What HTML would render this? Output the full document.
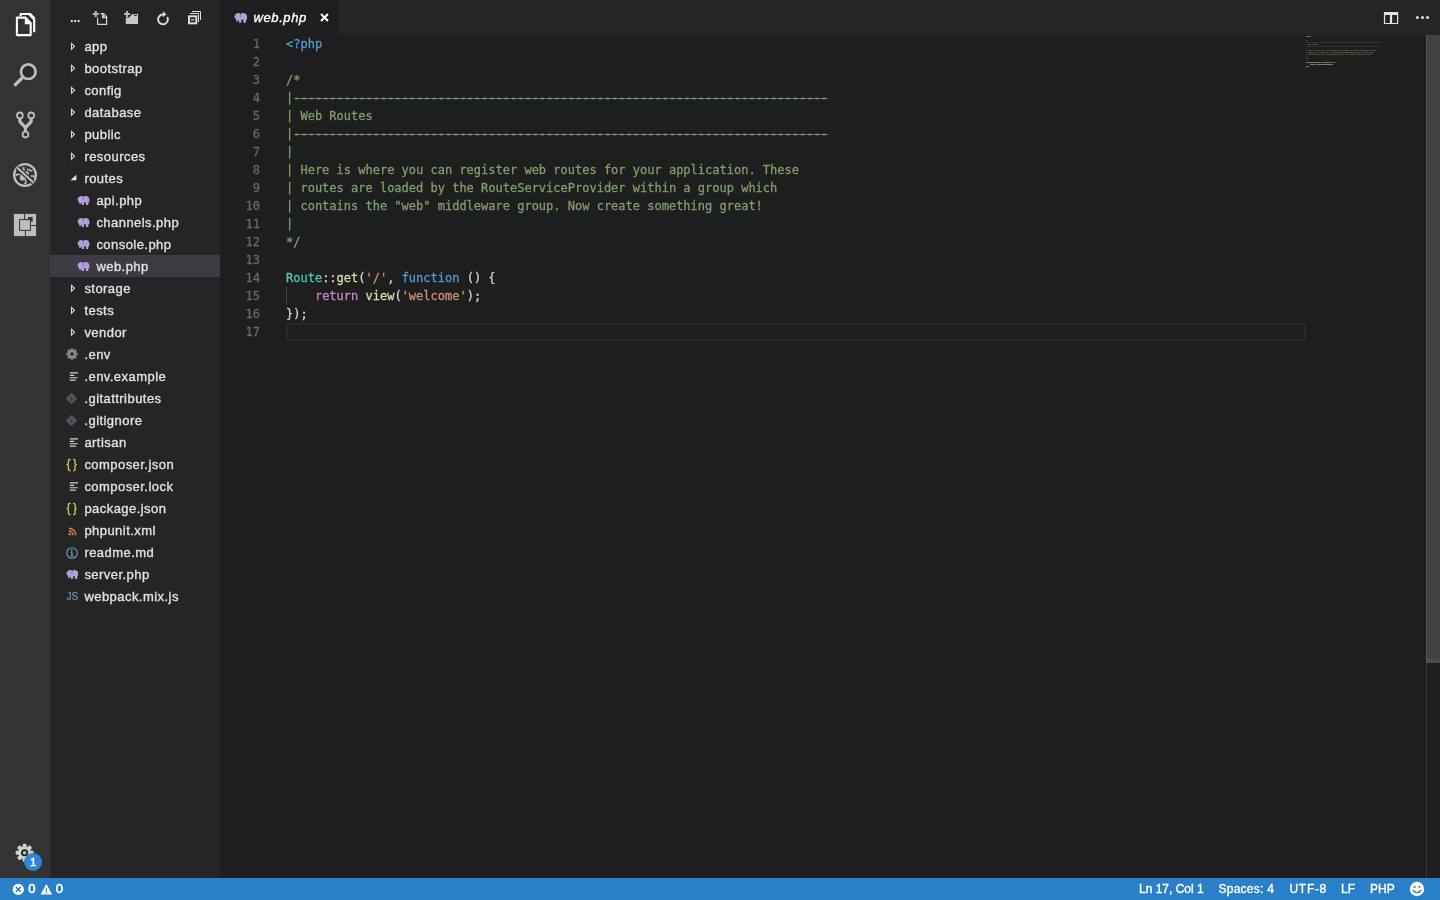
<!DOCTYPE html>
<html lang="en">
<head>
<meta charset="utf-8">
<title>web.php</title>
<style>
*{box-sizing:border-box;margin:0;padding:0}
html,body{width:1440px;height:900px;overflow:hidden;background:#1e1e1e}
body{font-family:"Liberation Sans","DejaVu Sans",sans-serif;font-size:13px;color:#cccccc;position:relative}
#activity{position:absolute;left:0;top:0;width:50px;height:878px;background:#333333}
#activity svg{position:absolute}
#badge{position:absolute;left:23.7px;top:852.6px;width:18.2px;height:18.2px;border-radius:50%;background:#2f86d6;color:#fff;text-align:center;will-change:transform}
#badge span{position:absolute;left:-10px;top:-10px;width:38.2px;height:38.2px;line-height:38.2px;font-size:30px;transform:scale(.385);-webkit-text-stroke:1.3px #fff}
#sidebar{position:absolute;left:50px;top:0;width:170px;height:878px;background:#252526}
#sidebar .hdr svg{position:absolute}
#tree{position:absolute;left:0;top:35px;width:170px;will-change:transform}
.row{position:relative;height:22px;line-height:22px;white-space:nowrap;color:#e0e0e0;font-size:13px;letter-spacing:.45px}
.row .lbl{position:absolute;left:34.4px;top:.5px;-webkit-text-stroke:.35px #e0e0e0}
.row.f2 .lbl{left:46.4px}
.row.sel{background:#3c3c43}
.row svg{position:absolute}
.row .tw{left:20px;top:7px}
#editor{position:absolute;left:220px;top:0;width:1220px;height:878px;background:#1e1e1e}
#tabs{will-change:transform;position:absolute;left:0;top:0;width:1220px;height:35px;background:#252526}
#tab{position:absolute;left:0;top:0;width:119px;height:35px;background:#1e1e1e}
#tab .name{position:absolute;left:33.5px;top:-.5px;line-height:35px;font-style:italic;color:#ffffff;font-size:13px;letter-spacing:.6px;-webkit-text-stroke:.35px #fff}
#code{will-change:transform;position:absolute;left:0;top:35px;width:1206px;font-family:"DejaVu Sans Mono","Liberation Mono",monospace;font-size:12px;line-height:18px;color:#d4d4d4;-webkit-text-stroke:.28px}
.ln{position:relative;height:18px;white-space:pre}
.ln .n{position:absolute;left:0;top:0;width:40px;text-align:right;color:#686868}
.ln .c{position:absolute;left:66px;top:0}
.cm{color:#819e6c}.kw{color:#569cd6}.cl{color:#4ec9b0}.fn{color:#dcdcaa}.st{color:#ce9178}.ct{color:#c586c0}
#status{will-change:transform;position:absolute;left:0;top:878px;width:1440px;height:22px;background:#2a7fc9;color:#fff;font-size:12px;line-height:22px}
#status span{position:absolute;top:0;white-space:nowrap;-webkit-text-stroke:.35px #fff}
#curline{position:absolute;left:66px;top:288px;width:1020px;height:18px;border:2px solid #282828}
#guide{position:absolute;left:66px;top:252px;width:1px;height:18px;background:#404040}
.dash{background:linear-gradient(rgba(129,158,108,.65),rgba(124,157,106,.65)) no-repeat 7.6px 6.7px/534px 1.2px;}
#minimap{position:absolute;left:1086px;top:35px;width:120px;height:40px}
#minimap i{position:absolute;height:1px;display:block}
#vscroll{position:absolute;left:1206px;top:35px;width:14px;height:843px}
</style>
</head>
<body>
<div id="activity">
<svg width="50" height="878" viewBox="0 0 50 878" style="left:0;top:0">
<!-- files -->
<g fill="none" stroke="#ffffff" stroke-width="2.1" stroke-linejoin="round">
<path d="M20.6 16 V14 H29.6 L34.2 18.9 V32.3"/>
<path d="M29.6 14 L34.2 18.9" stroke-width="3"/>
<path d="M16.9 17.6 H25.6 L30.7 23.2 V35.1 H16.9 Z"/>
</g>
<path d="M24.8 17 V24.3 H31 L25.6 17.4 Z" fill="#ffffff"/>
<!-- search -->
<circle cx="28.3" cy="71.7" r="7.3" fill="#2c2c2c" stroke="#bebebe" stroke-width="2.7"/>
<path d="M22.6 77.5 L14.4 85.7" stroke="#bebebe" stroke-width="3.2" fill="none"/>
<!-- git -->
<g fill="none" stroke="#bebebe">
<circle cx="19.9" cy="115.4" r="2.9" stroke-width="1.8"/>
<circle cx="31.2" cy="115.4" r="2.9" stroke-width="1.8"/>
<circle cx="25.5" cy="134.6" r="2.9" stroke-width="1.8"/>
<path d="M19.9 118.6 V121.6 L25.5 127.6 V131.4 M31.2 118.6 V121.6 L25.5 127.6" stroke-width="3.1" stroke-linejoin="round"/>
</g>
<!-- debug -->
<g fill="none" stroke="#bebebe">
<circle cx="25" cy="175" r="10.9" stroke-width="2.3"/>
<g stroke-width="1.5">
<path d="M16.3 176 V174.4 H20.4"/>
<path d="M24.2 183.6 H25.7 V179.6"/>
<path d="M22.3 167.9 H23.8 V171.4"/>
<path d="M30.6 176 H33.6 V177.4"/>
<path d="M29 169 L30.4 171 L32.4 170.4"/>
<path d="M27.4 168.6 L27.8 170.6"/>
</g>
</g>
<ellipse cx="24.4" cy="176" rx="3.4" ry="5.6" transform="rotate(45 24.4 176)" fill="#bebebe"/>
<path d="M17 167.4 L33.4 182.6" stroke="#333333" stroke-width="4.6" fill="none"/>
<path d="M17 167.4 L33.4 182.6" stroke="#bebebe" stroke-width="2.1" fill="none"/>
<!-- extensions -->
<rect x="13.9" y="213.9" width="22.2" height="22.2" fill="#bebebe"/>
<rect x="28.1" y="217" width="4.6" height="4.6" fill="#333333"/>
<path d="M24.7 213.9 V219.5 M30.5 225.5 H36.1 M25.4 230.5 V236.1" stroke="#333333" stroke-width="1" fill="none"/>
<rect x="19.6" y="219.6" width="10.8" height="10.8" fill="#bebebe" stroke="#333333" stroke-width="1"/>
<!-- gear -->
<g transform="translate(24.6 852.8)" fill="#d0d0d0">
<circle r="6.4"/>
<g id="teeth"><rect x="-2" y="-9" width="4" height="18" rx="1.2"/><rect x="-2" y="-9" width="4" height="18" rx="1.2" transform="rotate(45)"/><rect x="-2" y="-9" width="4" height="18" rx="1.2" transform="rotate(90)"/><rect x="-2" y="-9" width="4" height="18" rx="1.2" transform="rotate(135)"/></g>
<circle r="2.7" fill="#bdbdbd" stroke="#1e1e1e" stroke-width="1.7"/>
</g>

</svg>
<div id="badge"><span>1</span></div>
</div>
<div id="sidebar"><div class="hdr">
<svg width="170" height="35" viewBox="50 0 170 35" style="left:0;top:0">
<!-- more -->
<rect x="70.9" y="20" width="1.9" height="2.1" fill="#e4e4e4"/><rect x="74.3" y="20" width="1.9" height="2.1" fill="#e4e4e4"/><rect x="77.7" y="20" width="1.9" height="2.1" fill="#e4e4e4"/>
<!-- new file -->
<path d="M100.6 13.6 H103.6 L106.6 16.6 V24.4 H97.6 V17.6" fill="none" stroke="#d4d4d4" stroke-width="1.2"/>
<path d="M102.8 13.6 V17.4 H106.6" fill="none" stroke="#d4d4d4" stroke-width="1.7"/>
<path d="M95.8 10.9 V16.9 M92.8 13.9 H98.8" stroke="#9ccb99" stroke-width="2" fill="none"/>
<!-- new folder -->
<path d="M125.8 17.4 H129 L132.2 13.9 H138 V23.9 H125.8 Z" fill="#c8c8c8"/>
<path d="M133.8 15.4 H137" stroke="#252526" stroke-width="1"/>
<path d="M127 10.9 V16.9 M124 13.9 H130" stroke="#9ccb99" stroke-width="2" fill="none"/>
<!-- refresh -->
<path d="M167.2 16.9 A4.9 4.9 0 1 1 162.8 14.5" fill="none" stroke="#d8d8d8" stroke-width="2"/>
<path d="M162.9 11.2 L166.4 14.2 L162.9 17.2 Z" fill="#d8d8d8"/>
<!-- collapse -->
<rect x="189" y="16.3" width="7.3" height="7" fill="none" stroke="#d8d8d8" stroke-width="2"/>
<path d="M190.9 19.8 H194.3" stroke="#d8d8d8" stroke-width="1.2"/>
<path d="M190 13.5 H198.5 V22" fill="none" stroke="#e0e0e0" stroke-width="1"/>
<path d="M192 11.5 H200.5 V20" fill="none" stroke="#e0e0e0" stroke-width="1"/>
</svg>
</div><div id="tree">
<div class="row d"><svg class="tw" width="6" height="9" viewBox="0 0 6 9"><path d="M1.5 1.4 L4.5 4.3 L1.5 7.2 Z" fill="none" stroke="#dadada" stroke-width="1.1"/></svg><span class="lbl">app</span></div>
<div class="row d"><svg class="tw" width="6" height="9" viewBox="0 0 6 9"><path d="M1.5 1.4 L4.5 4.3 L1.5 7.2 Z" fill="none" stroke="#dadada" stroke-width="1.1"/></svg><span class="lbl">bootstrap</span></div>
<div class="row d"><svg class="tw" width="6" height="9" viewBox="0 0 6 9"><path d="M1.5 1.4 L4.5 4.3 L1.5 7.2 Z" fill="none" stroke="#dadada" stroke-width="1.1"/></svg><span class="lbl">config</span></div>
<div class="row d"><svg class="tw" width="6" height="9" viewBox="0 0 6 9"><path d="M1.5 1.4 L4.5 4.3 L1.5 7.2 Z" fill="none" stroke="#dadada" stroke-width="1.1"/></svg><span class="lbl">database</span></div>
<div class="row d"><svg class="tw" width="6" height="9" viewBox="0 0 6 9"><path d="M1.5 1.4 L4.5 4.3 L1.5 7.2 Z" fill="none" stroke="#dadada" stroke-width="1.1"/></svg><span class="lbl">public</span></div>
<div class="row d"><svg class="tw" width="6" height="9" viewBox="0 0 6 9"><path d="M1.5 1.4 L4.5 4.3 L1.5 7.2 Z" fill="none" stroke="#dadada" stroke-width="1.1"/></svg><span class="lbl">resources</span></div>
<div class="row d"><svg class="tw" width="7" height="9" viewBox="0 0 7 9"><path d="M6.3 .7 L6.3 6.2 L.5 6.2 Z" fill="#e8e8e8"/></svg><span class="lbl">routes</span></div>
<div class="row f2"><svg style="left:27.1px;top:6.8px" width="12.8" height="9.2" viewBox="0 0 12 9"><path d="M.4 3.4 C.5 1.6 2 .1 4.2 .1 C5 .1 5.5 .4 5.9 .9 C6.4 .3 7.2 0 8.2 0 C10.4 0 11.9 1.4 11.9 3.6 L11.9 5.8 L11.1 5.9 L10.7 8.9 L8.5 8.9 L8.4 6.3 C7.8 6 7.2 6 6.7 6.3 L6.6 8.9 L4.4 8.9 L4.4 6.9 L3.7 6.5 L3.4 7.9 L2 7.9 L1.8 5.6 C1 5.4 .4 4.6 .4 3.4 Z" fill="#b49fdc"/><path d="M5.9 .9 C5.5 2 5.5 3 5.8 4.2" fill="none" stroke="#3a3050" stroke-width=".55" opacity=".75"/></svg><span class="lbl">api.php</span></div>
<div class="row f2"><svg style="left:27.1px;top:6.8px" width="12.8" height="9.2" viewBox="0 0 12 9"><path d="M.4 3.4 C.5 1.6 2 .1 4.2 .1 C5 .1 5.5 .4 5.9 .9 C6.4 .3 7.2 0 8.2 0 C10.4 0 11.9 1.4 11.9 3.6 L11.9 5.8 L11.1 5.9 L10.7 8.9 L8.5 8.9 L8.4 6.3 C7.8 6 7.2 6 6.7 6.3 L6.6 8.9 L4.4 8.9 L4.4 6.9 L3.7 6.5 L3.4 7.9 L2 7.9 L1.8 5.6 C1 5.4 .4 4.6 .4 3.4 Z" fill="#b49fdc"/><path d="M5.9 .9 C5.5 2 5.5 3 5.8 4.2" fill="none" stroke="#3a3050" stroke-width=".55" opacity=".75"/></svg><span class="lbl">channels.php</span></div>
<div class="row f2"><svg style="left:27.1px;top:6.8px" width="12.8" height="9.2" viewBox="0 0 12 9"><path d="M.4 3.4 C.5 1.6 2 .1 4.2 .1 C5 .1 5.5 .4 5.9 .9 C6.4 .3 7.2 0 8.2 0 C10.4 0 11.9 1.4 11.9 3.6 L11.9 5.8 L11.1 5.9 L10.7 8.9 L8.5 8.9 L8.4 6.3 C7.8 6 7.2 6 6.7 6.3 L6.6 8.9 L4.4 8.9 L4.4 6.9 L3.7 6.5 L3.4 7.9 L2 7.9 L1.8 5.6 C1 5.4 .4 4.6 .4 3.4 Z" fill="#b49fdc"/><path d="M5.9 .9 C5.5 2 5.5 3 5.8 4.2" fill="none" stroke="#3a3050" stroke-width=".55" opacity=".75"/></svg><span class="lbl">console.php</span></div>
<div class="row f2 sel"><svg style="left:27.1px;top:6.8px" width="12.8" height="9.2" viewBox="0 0 12 9"><path d="M.4 3.4 C.5 1.6 2 .1 4.2 .1 C5 .1 5.5 .4 5.9 .9 C6.4 .3 7.2 0 8.2 0 C10.4 0 11.9 1.4 11.9 3.6 L11.9 5.8 L11.1 5.9 L10.7 8.9 L8.5 8.9 L8.4 6.3 C7.8 6 7.2 6 6.7 6.3 L6.6 8.9 L4.4 8.9 L4.4 6.9 L3.7 6.5 L3.4 7.9 L2 7.9 L1.8 5.6 C1 5.4 .4 4.6 .4 3.4 Z" fill="#b49fdc"/><path d="M5.9 .9 C5.5 2 5.5 3 5.8 4.2" fill="none" stroke="#3a3050" stroke-width=".55" opacity=".75"/></svg><span class="lbl">web.php</span></div>
<div class="row d"><svg class="tw" width="6" height="9" viewBox="0 0 6 9"><path d="M1.5 1.4 L4.5 4.3 L1.5 7.2 Z" fill="none" stroke="#dadada" stroke-width="1.1"/></svg><span class="lbl">storage</span></div>
<div class="row d"><svg class="tw" width="6" height="9" viewBox="0 0 6 9"><path d="M1.5 1.4 L4.5 4.3 L1.5 7.2 Z" fill="none" stroke="#dadada" stroke-width="1.1"/></svg><span class="lbl">tests</span></div>
<div class="row d"><svg class="tw" width="6" height="9" viewBox="0 0 6 9"><path d="M1.5 1.4 L4.5 4.3 L1.5 7.2 Z" fill="none" stroke="#dadada" stroke-width="1.1"/></svg><span class="lbl">vendor</span></div>
<div class="row f"><svg style="left:15.5px;top:5px" width="12" height="12" viewBox="-6 -6 12 12"><g fill="#868c8f"><circle r="4.1"/><rect x="-1.3" y="-5.6" width="2.6" height="11.2"/><rect x="-1.3" y="-5.6" width="2.6" height="11.2" transform="rotate(45)"/><rect x="-1.3" y="-5.6" width="2.6" height="11.2" transform="rotate(90)"/><rect x="-1.3" y="-5.6" width="2.6" height="11.2" transform="rotate(135)"/></g><circle r="1.8" fill="#252526"/></svg><span class="lbl">.env</span></div>
<div class="row f"><svg style="left:19px;top:6px" width="10" height="11" viewBox="0 0 10 11"><g stroke="#d0d0d0" stroke-width="1.15"><path d="M.8 1.9h8.3M.8 4.3h4.4M.8 6.7h8M.8 9.1h6"/></g></svg><span class="lbl">.env.example</span></div>
<div class="row f"><svg style="left:15px;top:5px" width="13" height="13" viewBox="0 0 13 13"><rect x="2.4" y="2.4" width="8.2" height="8.2" rx="1" transform="rotate(45 6.5 6.5)" fill="#4b595e"/><path d="M5 4.5 L8 7.5 M6.5 6 V9" stroke="#2c3236" stroke-width="1" fill="none"/></svg><span class="lbl">.gitattributes</span></div>
<div class="row f"><svg style="left:15px;top:5px" width="13" height="13" viewBox="0 0 13 13"><rect x="2.4" y="2.4" width="8.2" height="8.2" rx="1" transform="rotate(45 6.5 6.5)" fill="#4b595e"/><path d="M5 4.5 L8 7.5 M6.5 6 V9" stroke="#2c3236" stroke-width="1" fill="none"/></svg><span class="lbl">.gitignore</span></div>
<div class="row f"><svg style="left:19px;top:6px" width="10" height="11" viewBox="0 0 10 11"><g stroke="#d0d0d0" stroke-width="1.15"><path d="M.8 1.9h8.3M.8 4.3h4.4M.8 6.7h8M.8 9.1h6"/></g></svg><span class="lbl">artisan</span></div>
<div class="row f"><span style="position:absolute;left:16.5px;top:-.5px;font-size:12px;color:#c9c85a;letter-spacing:2.4px;-webkit-text-stroke:.3px #c9c85a">{}</span><span class="lbl">composer.json</span></div>
<div class="row f"><svg style="left:19px;top:6px" width="10" height="11" viewBox="0 0 10 11"><g stroke="#d0d0d0" stroke-width="1.15"><path d="M.8 1.9h8.3M.8 4.3h4.4M.8 6.7h8M.8 9.1h6"/></g></svg><span class="lbl">composer.lock</span></div>
<div class="row f"><span style="position:absolute;left:16.5px;top:-.5px;font-size:12px;color:#c9c85a;letter-spacing:2.4px;-webkit-text-stroke:.3px #c9c85a">{}</span><span class="lbl">package.json</span></div>
<div class="row f"><svg style="left:17.5px;top:7.5px" width="9" height="9" viewBox="0 0 11 11"><circle cx="2.2" cy="8.8" r="1.5" fill="#d97b4c"/><path d="M1 5 A5 5 0 0 1 6 10 M1 1.6 A8.4 8.4 0 0 1 9.4 10" fill="none" stroke="#d97b4c" stroke-width="1.9"/></svg><span class="lbl">phpunit.xml</span></div>
<div class="row f"><svg style="left:15px;top:4.7px" width="14" height="14" viewBox="0 0 14 14"><circle cx="7" cy="7" r="5.3" fill="none" stroke="#6ea3bd" stroke-width="1.1"/><path d="M7 6.2v3.6M5.8 6.2H7M5.6 9.9h2.9" stroke="#6ea3bd" stroke-width="1.2" fill="none"/><circle cx="6.9" cy="4.2" r=".85" fill="#6ea3bd"/></svg><span class="lbl">readme.md</span></div>
<div class="row f"><svg style="left:15.6px;top:6.8px" width="12.6" height="9.2" viewBox="0 0 12 9"><path d="M.4 3.4 C.5 1.6 2 .1 4.2 .1 C5 .1 5.5 .4 5.9 .9 C6.4 .3 7.2 0 8.2 0 C10.4 0 11.9 1.4 11.9 3.6 L11.9 5.8 L11.1 5.9 L10.7 8.9 L8.5 8.9 L8.4 6.3 C7.8 6 7.2 6 6.7 6.3 L6.6 8.9 L4.4 8.9 L4.4 6.9 L3.7 6.5 L3.4 7.9 L2 7.9 L1.8 5.6 C1 5.4 .4 4.6 .4 3.4 Z" fill="#b49fdc"/><path d="M5.9 .9 C5.5 2 5.5 3 5.8 4.2" fill="none" stroke="#3a3050" stroke-width=".55" opacity=".75"/></svg><span class="lbl">server.php</span></div>
<div class="row f"><span style="position:absolute;left:16.5px;top:.5px;font-size:10px;color:#5d93b0;letter-spacing:-.1px;-webkit-text-stroke:.25px #5d93b0">JS</span><span class="lbl">webpack.mix.js</span></div>
</div></div>
<div id="editor">
<div id="tabs"><div id="tab">
<svg style="position:absolute;left:14.2px;top:12.9px" width="13.3" height="9.8" viewBox="0 0 12 9"><path d="M.4 3.4 C.5 1.6 2 .1 4.2 .1 C5 .1 5.5 .4 5.9 .9 C6.4 .3 7.2 0 8.2 0 C10.4 0 11.9 1.4 11.9 3.6 L11.9 5.8 L11.1 5.9 L10.7 8.9 L8.5 8.9 L8.4 6.3 C7.8 6 7.2 6 6.7 6.3 L6.6 8.9 L4.4 8.9 L4.4 6.9 L3.7 6.5 L3.4 7.9 L2 7.9 L1.8 5.6 C1 5.4 .4 4.6 .4 3.4 Z" fill="#b49fdc"/><path d="M5.9 .9 C5.5 2 5.5 3 5.8 4.2" fill="none" stroke="#3a3050" stroke-width=".55" opacity=".75"/></svg>
<span class="name">web.php</span>
<svg style="position:absolute;left:100px;top:13px" width="9" height="9" viewBox="0 0 9 9"><path d="M1 1 L8 8 M8 1 L1 8" stroke="#ffffff" stroke-width="2" fill="none"/></svg>
</div>
<svg style="position:absolute;left:1160px;top:8px" width="56" height="20" viewBox="1380 8 56 20">
<path d="M1383.9 11.9 H1398.2 V24.1 H1383.9 Z M1385.1 15.1 V22.9 H1389.9 V15.1 Z M1392.1 15.1 V22.9 H1397 V15.1 Z" fill="#e4e4e4" fill-rule="evenodd"/>
<circle cx="1417.4" cy="17.5" r="1.6" fill="#d8d8d8"/><circle cx="1422.5" cy="17.5" r="1.6" fill="#d8d8d8"/><circle cx="1427.6" cy="17.5" r="1.6" fill="#d8d8d8"/>
</svg></div>
<div id="code">
<div class="ln"><span class="n">1</span><span class="c"><span class="kw">&lt;?php</span></span></div>
<div class="ln"><span class="n">2</span><span class="c"></span></div>
<div class="ln"><span class="n">3</span><span class="c"><span class="cm">/*</span></span></div>
<div class="ln"><span class="n">4</span><span class="c"><span class="cm dash">|--------------------------------------------------------------------------</span></span></div>
<div class="ln"><span class="n">5</span><span class="c"><span class="cm">| Web Routes</span></span></div>
<div class="ln"><span class="n">6</span><span class="c"><span class="cm dash">|--------------------------------------------------------------------------</span></span></div>
<div class="ln"><span class="n">7</span><span class="c"><span class="cm">|</span></span></div>
<div class="ln"><span class="n">8</span><span class="c"><span class="cm">| Here is where you can register web routes for your application. These</span></span></div>
<div class="ln"><span class="n">9</span><span class="c"><span class="cm">| routes are loaded by the RouteServiceProvider within a group which</span></span></div>
<div class="ln"><span class="n">10</span><span class="c"><span class="cm">| contains the "web" middleware group. Now create something great!</span></span></div>
<div class="ln"><span class="n">11</span><span class="c"><span class="cm">|</span></span></div>
<div class="ln"><span class="n">12</span><span class="c"><span class="cm">*/</span></span></div>
<div class="ln"><span class="n">13</span><span class="c"></span></div>
<div class="ln"><span class="n">14</span><span class="c"><span class="cl">Route</span>::<span class="fn">get</span>(<span class="st">'/'</span>, <span class="kw">function</span> () {</span></div>
<div class="ln"><span class="n">15</span><span class="c">    <span class="ct">return</span> <span class="fn">view</span>(<span class="st">'welcome'</span>);</span></div>
<div class="ln"><span class="n">16</span><span class="c">});</span></div>
<div class="ln"><span class="n">17</span><span class="c"></span></div>
<div id="curline"></div><div id="guide"></div>
</div>
<div id="minimap"><i style="left:0px;top:1px;width:5px;background:#8fb4d8;opacity:0.5"></i><i style="left:0px;top:5px;width:2px;background:#819e6c;opacity:0.42"></i><i style="left:0px;top:7px;width:75px;background:#819e6c;opacity:0.16"></i><i style="left:0px;top:9px;width:1px;background:#819e6c;opacity:0.42"></i><i style="left:2px;top:9px;width:3px;background:#819e6c;opacity:0.42"></i><i style="left:6px;top:9px;width:6px;background:#819e6c;opacity:0.42"></i><i style="left:0px;top:11px;width:75px;background:#819e6c;opacity:0.16"></i><i style="left:0px;top:13px;width:1px;background:#819e6c;opacity:0.42"></i><i style="left:0px;top:15px;width:1px;background:#819e6c;opacity:0.42"></i><i style="left:2px;top:15px;width:4px;background:#819e6c;opacity:0.42"></i><i style="left:7px;top:15px;width:2px;background:#819e6c;opacity:0.42"></i><i style="left:10px;top:15px;width:5px;background:#819e6c;opacity:0.42"></i><i style="left:16px;top:15px;width:3px;background:#819e6c;opacity:0.42"></i><i style="left:20px;top:15px;width:3px;background:#819e6c;opacity:0.42"></i><i style="left:24px;top:15px;width:8px;background:#819e6c;opacity:0.42"></i><i style="left:33px;top:15px;width:3px;background:#819e6c;opacity:0.42"></i><i style="left:37px;top:15px;width:6px;background:#819e6c;opacity:0.42"></i><i style="left:44px;top:15px;width:3px;background:#819e6c;opacity:0.42"></i><i style="left:48px;top:15px;width:4px;background:#819e6c;opacity:0.42"></i><i style="left:53px;top:15px;width:12px;background:#819e6c;opacity:0.42"></i><i style="left:66px;top:15px;width:5px;background:#819e6c;opacity:0.42"></i><i style="left:0px;top:17px;width:1px;background:#819e6c;opacity:0.42"></i><i style="left:2px;top:17px;width:6px;background:#819e6c;opacity:0.42"></i><i style="left:9px;top:17px;width:3px;background:#819e6c;opacity:0.42"></i><i style="left:13px;top:17px;width:6px;background:#819e6c;opacity:0.42"></i><i style="left:20px;top:17px;width:2px;background:#819e6c;opacity:0.42"></i><i style="left:23px;top:17px;width:3px;background:#819e6c;opacity:0.42"></i><i style="left:27px;top:17px;width:20px;background:#819e6c;opacity:0.42"></i><i style="left:48px;top:17px;width:6px;background:#819e6c;opacity:0.42"></i><i style="left:55px;top:17px;width:1px;background:#819e6c;opacity:0.42"></i><i style="left:57px;top:17px;width:5px;background:#819e6c;opacity:0.42"></i><i style="left:63px;top:17px;width:5px;background:#819e6c;opacity:0.42"></i><i style="left:0px;top:19px;width:1px;background:#819e6c;opacity:0.42"></i><i style="left:2px;top:19px;width:8px;background:#819e6c;opacity:0.42"></i><i style="left:11px;top:19px;width:3px;background:#819e6c;opacity:0.42"></i><i style="left:15px;top:19px;width:5px;background:#819e6c;opacity:0.42"></i><i style="left:21px;top:19px;width:10px;background:#819e6c;opacity:0.42"></i><i style="left:32px;top:19px;width:6px;background:#819e6c;opacity:0.42"></i><i style="left:39px;top:19px;width:3px;background:#819e6c;opacity:0.42"></i><i style="left:43px;top:19px;width:6px;background:#819e6c;opacity:0.42"></i><i style="left:50px;top:19px;width:9px;background:#819e6c;opacity:0.42"></i><i style="left:60px;top:19px;width:6px;background:#819e6c;opacity:0.42"></i><i style="left:0px;top:21px;width:1px;background:#819e6c;opacity:0.42"></i><i style="left:0px;top:23px;width:2px;background:#819e6c;opacity:0.42"></i><i style="left:0px;top:27px;width:15px;background:#d4d4d4;opacity:0.5"></i><i style="left:16px;top:27px;width:8px;background:#d4d4d4;opacity:0.5"></i><i style="left:25px;top:27px;width:2px;background:#d4d4d4;opacity:0.5"></i><i style="left:28px;top:27px;width:1px;background:#d4d4d4;opacity:0.5"></i><i style="left:4px;top:29px;width:6px;background:#d4d4d4;opacity:0.5"></i><i style="left:11px;top:29px;width:16px;background:#d4d4d4;opacity:0.5"></i><i style="left:0px;top:31px;width:3px;background:#d4d4d4;opacity:0.5"></i></div>
<div id="vscroll"><div style="position:absolute;left:0;top:0;width:1px;height:843px;background:#383838"></div><div style="position:absolute;left:0;top:0;width:14px;height:628px;background:#424242;border-left:1px solid #565656"></div><div style="position:absolute;left:1px;top:624px;width:13px;height:4px;background:rgba(255,255,255,.05)"></div></div>
</div>
<div id="status">
<svg style="position:absolute;left:0;top:0" width="70" height="22" viewBox="0 878 70 22">
<circle cx="18.3" cy="889.4" r="5.6" fill="#ffffff"/>
<path d="M15.9 887 L20.7 891.8 M20.7 887 L15.9 891.8" stroke="#2a7fc9" stroke-width="1.6" fill="none"/>
<path d="M46.4 884 L52.2 894.4 H40.6 Z" fill="#ffffff"/>
<path d="M46.4 887.4 V891.4" stroke="#2a7fc9" stroke-width="1.1"/><circle cx="46.4" cy="892.8" r=".7" fill="#2a7fc9"/>
</svg>
<span style="left:28.2px;font-size:13px;top:-.5px;-webkit-text-stroke:.55px #fff">0</span><span style="left:55.7px;font-size:13px;top:-.5px;-webkit-text-stroke:.55px #fff">0</span>
<span style="left:1139px">Ln 17, Col 1</span>
<span style="left:1218.5px;letter-spacing:.25px">Spaces: 4</span>
<span style="left:1289.5px;letter-spacing:.7px">UTF-8</span>
<span style="left:1341px">LF</span>
<span style="left:1370px">PHP</span>
<svg style="position:absolute;left:1409px;top:3px" width="16" height="16" viewBox="0 0 16 16"><circle cx="8" cy="8" r="7.2" fill="#ffffff"/><circle cx="5.6" cy="6" r="1.1" fill="#2a7fc9"/><circle cx="10.4" cy="6" r="1.1" fill="#2a7fc9"/><path d="M3.8 9 Q8 14.4 12.2 9" fill="none" stroke="#2a7fc9" stroke-width="1.3"/></svg>
</div>
</body>
</html>
